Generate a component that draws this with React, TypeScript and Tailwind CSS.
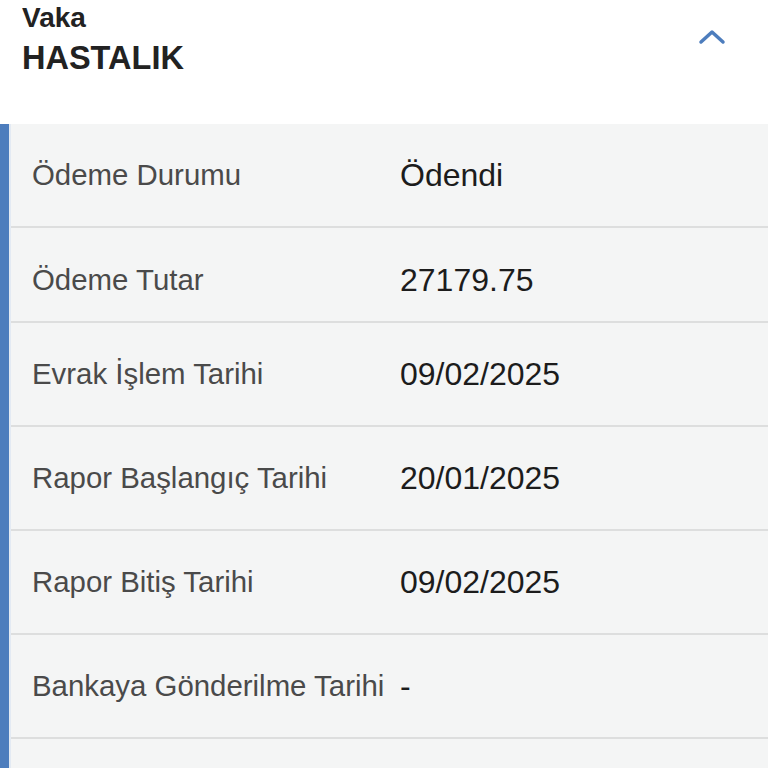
import React from 'react';

const rows = [
  { label: 'Ödeme Durumu', value: 'Ödendi', h: 'h-[104px]' },
  { label: 'Ödeme Tutar', value: '27179.75', h: 'h-[95px] pt-[10px]' },
  { label: 'Evrak İşlem Tarihi', value: '09/02/2025', h: 'h-[104px]' },
  { label: 'Rapor Başlangıç Tarihi', value: '20/01/2025', h: 'h-[104px]' },
  { label: 'Rapor Bitiş Tarihi', value: '09/02/2025', h: 'h-[104px]' },
  { label: 'Bankaya Gönderilme Tarihi', value: '-', h: 'h-[104px]' },
  { label: '', value: '', h: 'h-[104px]' },
];

export default function App() {
  return (
    <div className="w-[768px] h-[768px] overflow-hidden bg-white font-['Liberation_Sans',Arial,sans-serif]">
      {/* Header */}
      <div className="h-[124px] flex justify-between pl-[22px] pr-[42px]">
        <div className="pt-[4px] text-[#222]">
          <div className="text-[28px] leading-[28px] font-bold">Vaka</div>
          <div className="mt-[10px] text-[32.5px] leading-[32px] font-bold">HASTALIK</div>
        </div>
        <div className="pt-[29px]">
          <svg width="28" height="16" viewBox="0 0 28 16">
            <polyline points="3,13 14,3 25,13" fill="none" stroke="#4d7dbd" strokeWidth="3.5" strokeLinecap="round" strokeLinejoin="round" />
          </svg>
        </div>
      </div>

      {/* Detail panel */}
      <div className="flex bg-[#f4f5f5]">
        <div className="w-[9px] bg-[#4d7dbd] shrink-0" />
        <div className="w-[2px] bg-[#e3eaf3] shrink-0" />
        <div className="flex-1 flex flex-col">
          {rows.map((r, i) => (
            <div
              key={i}
              className={`${r.h} shrink-0 flex items-center border-b-2 border-[#dddede] pl-[21px]`}
            >
              <div className="w-[368px] shrink-0 text-[29.4px] leading-none text-[#4a4a4a] whitespace-nowrap">
                {r.label}
              </div>
              <div className="text-[32px] leading-none text-[#1c1c1c]">{r.value}</div>
            </div>
          ))}
        </div>
      </div>
    </div>
  );
}
